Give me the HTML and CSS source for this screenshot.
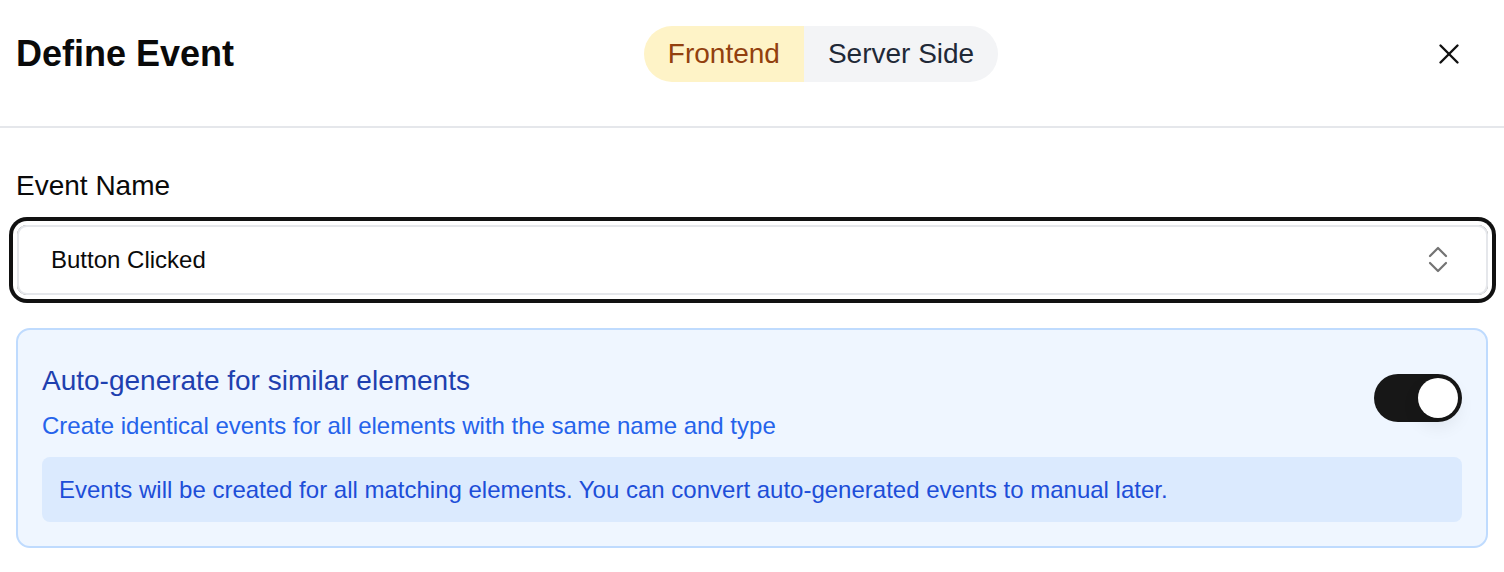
FILE: index.html
```html
<!DOCTYPE html>
<html lang="en">
<head>
<meta charset="utf-8">
<title>Define Event</title>
<link rel="stylesheet" href="styles.css">
</head>
<body>
<div class="dialog">
  <header class="header">
    <h1 class="title">Define Event</h1>
    <div class="segmented">
      <button class="seg seg-active">Frontend</button>
      <button class="seg">Server Side</button>
    </div>
    <button class="close" aria-label="Close">
      <svg width="34" height="34" viewBox="0 0 24 24" fill="none" stroke="#111" stroke-width="1.7" stroke-linecap="round"><path d="M18 6 6 18"/><path d="m6 6 12 12"/></svg>
    </button>
  </header>
  <main class="body">
    <label class="label">Event Name</label>
    <div class="select">
      <span class="select-value">Button Clicked</span>
      <svg class="chev" width="20" height="28" viewBox="0 0 20 28" fill="none" stroke="#737373" stroke-width="2.2" stroke-linecap="round" stroke-linejoin="round"><path d="M2 10 10 2 18 10"/><path d="M2 17 10 25 18 17"/></svg>
    </div>
    <section class="card">
      <div class="card-row">
        <div class="card-text">
          <div class="card-title">Auto-generate for similar elements</div>
          <div class="card-sub">Create identical events for all elements with the same name and type</div>
        </div>
        <div class="switch"><span class="knob"></span></div>
      </div>
      <div class="info">Events will be created for all matching elements. You can convert auto-generated events to manual later.</div>
    </section>
  </main>
</div>
</body>
</html>
```
FILE: styles.css
```css
* { box-sizing: border-box; }
html, body { margin: 0; padding: 0; background: #fff; }
body {
  font-family: "Liberation Sans", Arial, sans-serif;
  color: #0a0a0a;
}
.header {
  display: flex;
  align-items: center;
  justify-content: space-between;
  padding: 26px 16px 44px 16px;
  border-bottom: 2px solid #e5e7eb;
}
.title {
  margin: 0;
  font-size: 36px;
  font-weight: 700;
  line-height: 56px;
  width: 217px;
  white-space: nowrap;
}
.segmented {
  display: flex;
  height: 56px;
  border-radius: 28px;
  overflow: hidden;
}
.seg {
  border: 0;
  margin: 0;
  font-family: inherit;
  font-size: 28px;
  line-height: 56px;
  padding: 0 24px;
  background: #f3f4f6;
  color: #1f2937;
}
.seg-active {
  background: #fef3c7;
  color: #92400e;
}
.close {
  width: 79px;
  height: 56px;
  border: 0;
  background: transparent;
  padding: 0;
  display: flex;
  align-items: center;
  justify-content: center;
}
.body {
  padding: 42px 16px 0 16px;
  display: flex;
  flex-direction: column;
}
.label {
  font-size: 28px;
  line-height: 32px;
}
.select {
  margin: 23px 0 0 1px;
  height: 70px;
  border: 2px solid #e5e7eb;
  border-radius: 10px;
  box-shadow: 0 0 0 4px #fff, 0 0 0 8px #111;
  display: flex;
  align-items: center;
  justify-content: space-between;
  padding: 0 38px 0 32px;
  font-size: 24px;
}
.chev { display: block; margin-top: -1px; }
.card {
  margin-top: 33px;
  border: 2px solid #bfdbfe;
  background: #eff6ff;
  border-radius: 14px;
  padding: 35px 24px 24px 24px;
}
.card-row {
  display: flex;
  justify-content: space-between;
  align-items: flex-start;
}
.card-title {
  font-size: 28px;
  line-height: 32px;
  color: #1e40af;
}
.card-sub {
  margin-top: 13px;
  font-size: 24px;
  line-height: 32px;
  color: #2563eb;
}
.switch {
  margin-top: 9px;
  width: 88px;
  height: 48px;
  border-radius: 24px;
  background: #171717;
  padding: 4px;
  display: flex;
  justify-content: flex-end;
}
.knob {
  width: 40px;
  height: 40px;
  border-radius: 50%;
  background: #fff;
  box-shadow: 0 8px 18px rgba(0, 0, 0, 0.08);
}
.info {
  margin-top: 15px;
  background: #dbeafe;
  border-radius: 8px;
  padding: 16px 17px;
  font-size: 24px;
  line-height: 33px;
  color: #1d4ed8;
}
```
